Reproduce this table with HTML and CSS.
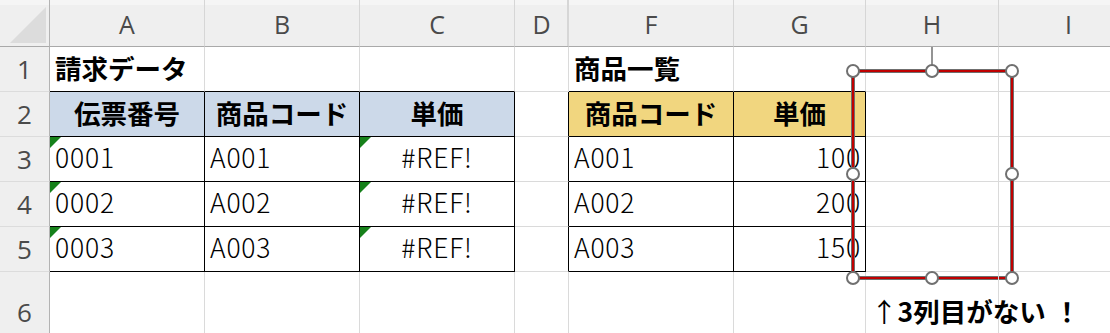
FILE: index.html
```html
<!DOCTYPE html>
<html lang="ja">
<head>
<meta charset="utf-8">
<title>Sheet</title>
<link rel="stylesheet" href="styles.css">
</head>
<body>
<div class="sheet">
  <div class="grid">
    <!-- column header row -->
    <div class="ch corner"><svg width="49" height="46" viewBox="0 0 49 46"><polygon points="46,7 46,43 10,43" fill="#dcdcdc"/></svg></div>
    <div class="ch">A</div>
    <div class="ch">B</div>
    <div class="ch">C</div>
    <div class="ch colD">D</div>
    <div class="ch">F</div>
    <div class="ch">G</div>
    <div class="ch">H</div>
    <div class="ch">I</div>

    <!-- row 1 -->
    <div class="rh">1</div>
    <div class="c bold bb">請求データ</div>
    <div class="c bb"></div>
    <div class="c bb"></div>
    <div class="c"></div>
    <div class="c bold bb">商品一覧</div>
    <div class="c bb"></div>
    <div class="c"></div>
    <div class="c"></div>

    <!-- row 2 -->
    <div class="rh">2</div>
    <div class="c bold center blue box">伝票番号</div>
    <div class="c bold center blue box">商品コード</div>
    <div class="c bold center blue box">単価</div>
    <div class="c br"></div>
    <div class="c bold center yellow box">商品コード</div>
    <div class="c bold center yellow box">単価</div>
    <div class="c"></div>
    <div class="c"></div>

    <!-- row 3 -->
    <div class="rh">3</div>
    <div class="c box flag">0001</div>
    <div class="c box">A001</div>
    <div class="c box center flag">#REF!</div>
    <div class="c br"></div>
    <div class="c box">A001</div>
    <div class="c box right">100</div>
    <div class="c"></div>
    <div class="c"></div>

    <!-- row 4 -->
    <div class="rh">4</div>
    <div class="c box flag">0002</div>
    <div class="c box">A002</div>
    <div class="c box center flag">#REF!</div>
    <div class="c br"></div>
    <div class="c box">A002</div>
    <div class="c box right">200</div>
    <div class="c"></div>
    <div class="c"></div>

    <!-- row 5 -->
    <div class="rh">5</div>
    <div class="c box flag">0003</div>
    <div class="c box">A003</div>
    <div class="c box center flag">#REF!</div>
    <div class="c br"></div>
    <div class="c box">A003</div>
    <div class="c box right">150</div>
    <div class="c"></div>
    <div class="c"></div>

    <!-- row 6 -->
    <div class="rh">6</div>
    <div class="c"></div>
    <div class="c"></div>
    <div class="c"></div>
    <div class="c"></div>
    <div class="c"></div>
    <div class="c"></div>
    <div class="c note"><span class="arrow">↑</span>3列目がない<span class="bang">！</span></div>
    <div class="c"></div>
  </div>

  <svg class="shape" width="200" height="250" viewBox="843 40 200 250">
    <line x1="932" y1="47" x2="932" y2="66" stroke="#707070" stroke-width="1.5"/>
    <rect x="853" y="71" width="159" height="207" fill="none" stroke="#6f6f6f" stroke-width="4"/>
    <rect x="853" y="71" width="159" height="207" fill="none" stroke="#c00000" stroke-width="2"/>
    <g fill="#ffffff" stroke="#707070" stroke-width="2">
      <circle cx="853" cy="71" r="6"/>
      <circle cx="932" cy="71" r="6"/>
      <circle cx="1012" cy="71" r="6"/>
      <circle cx="853" cy="174" r="6"/>
      <circle cx="1012" cy="174" r="6"/>
      <circle cx="853" cy="278" r="6"/>
      <circle cx="932" cy="278" r="6"/>
      <circle cx="1012" cy="278" r="6"/>
    </g>
  </svg>
</div>
</body>
</html>
```

FILE: styles.css
```css
* { box-sizing: border-box; }

html, body {
  margin: 0;
  padding: 0;
  background: #ffffff;
}

.sheet {
  position: relative;
  width: 1110px;
  height: 333px;
  overflow: hidden;
  font-family: "Noto Sans CJK JP", "Noto Sans", sans-serif;
  color: #000;
}

.grid {
  display: grid;
  grid-template-columns: 50px 155px 155px 155px 54px 165px 132px 133px 140px;
  grid-template-rows: 47px 45px 45px 45px 45px 45px 80px;
}

.ch {
  background: linear-gradient(#f5f5f5 0 5px, #efefef 5px);
  border-right: 1px solid #d6d6d6;
  border-bottom: 1px solid #a9a9a9;
  display: flex;
  align-items: center;
  justify-content: center;
  font-family: "Open Sans", "Noto Sans", sans-serif;
  font-size: 25px;
  color: #4a4a4a;
  padding-top: 1px;
}

.ch.corner {
  border-right: 1px solid #b3b3b3;
  padding: 0;
  display: block;
}

.ch.corner svg { display: block; }

.ch.colD {
  border-right: 1px solid #d6d6d6;
  box-shadow: inset -3px 0 0 -2px #d6d6d6;
}

.rh {
  background: #efefef;
  border-right: 1px solid #b3b3b3;
  border-bottom: 1px solid #dcdcdc;
  display: flex;
  align-items: center;
  justify-content: center;
  font-family: "Open Sans", "Noto Sans", sans-serif;
  font-size: 26px;
  color: #4a4a4a;
}

.c {
  position: relative;
  border-right: 1px solid #dadada;
  border-bottom: 1px solid #dadada;
  display: flex;
  align-items: center;
  padding: 0 5px 3px;
  font-size: 26.5px;
  font-weight: 300;
  letter-spacing: 0.8px;
  line-height: 1;
  white-space: nowrap;
}

.bold { font-weight: 700; padding-bottom: 2px; letter-spacing: 0; }
.center { justify-content: center; }
.right { justify-content: flex-end; padding-right: 4px; }

.blue { background: #ccd9e9; }
.yellow { background: #f1d67f; }

.box {
  border-right-color: #000;
  border-bottom-color: #000;
}

.bb { border-bottom-color: #000; }
.br { border-right-color: #000; }

.flag::before {
  content: "";
  position: absolute;
  left: 0;
  top: 0;
  border-top: 11px solid #16811a;
  border-right: 11px solid transparent;
}

.note {
  overflow: visible;
  padding: 0 0 0 5px;
  font-weight: 700;
  letter-spacing: 0;
  z-index: 1;
}

.note .arrow {
  font-weight: 400;
}

.note .bang {
  margin-left: 8px;
}

.shape {
  position: absolute;
  left: 843px;
  top: 40px;
  overflow: visible;
}
```
